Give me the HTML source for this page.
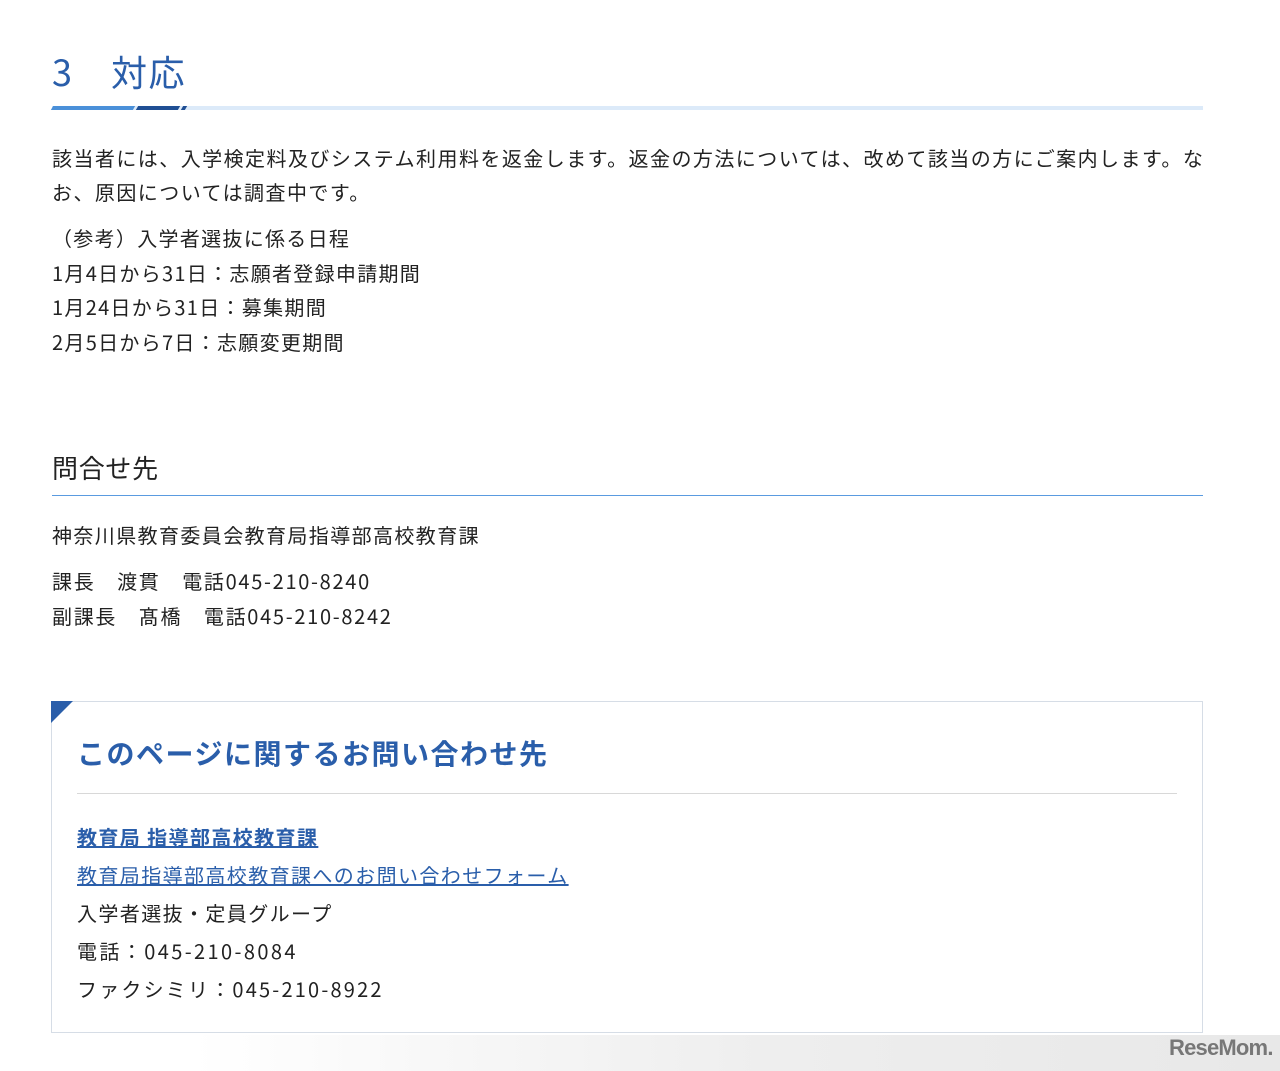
<!DOCTYPE html>
<html><head><meta charset="utf-8"><style>
body{margin:0;width:1280px;height:1071px;background:#fff;font-family:"Noto Sans CJK JP","Liberation Sans",sans-serif;color:#222;position:relative;overflow:hidden;letter-spacing:0.7px}
.a{position:absolute;white-space:nowrap}
p{margin:0}
</style></head><body>
<div class="a" style="left:52px;top:46px;font-size:36px;color:#2a5eaa;line-height:50px;letter-spacing:1.5px">3　対応</div>
<div class="a" style="left:52px;top:106px;width:1151px;height:4px;background:#dceaf9"></div>
<div class="a" style="left:52px;top:106px;width:82px;height:4px;background:#4a90d9;transform:skewX(-30deg)"></div>
<div class="a" style="left:137px;top:106px;width:42px;height:4px;background:#1f4f94;transform:skewX(-30deg)"></div>
<div class="a" style="left:182px;top:106px;width:4px;height:4px;background:#1f4f94;transform:skewX(-30deg)"></div>
<div class="a" style="left:52px;top:141px;font-size:20px;line-height:34px;letter-spacing:1.45px">該当者には、入学検定料及びシステム利用料を返金します。返金の方法については、改めて該当の方にご案内します。な<br>お、原因については調査中です。</div>
<div class="a" style="left:52px;top:221px;font-size:20px;line-height:34.5px;letter-spacing:1.3px">（参考）入学者選抜に係る日程<br>1月4日から31日：志願者登録申請期間<br>1月24日から31日：募集期間<br>2月5日から7日：志願変更期間</div>
<div class="a" style="left:52px;top:449px;font-size:26px;line-height:38px">問合せ先</div>
<div class="a" style="left:52px;top:495px;width:1151px;height:1px;background:#5a9be0"></div>
<div class="a" style="left:52px;top:518px;font-size:20px;line-height:34px;letter-spacing:1.4px">神奈川県教育委員会教育局指導部高校教育課</div>
<div class="a" style="left:52px;top:564px;font-size:20px;line-height:34.5px;letter-spacing:1.7px">課長　渡貫　電話045-210-8240<br>副課長　髙橋　電話045-210-8242</div>
<div class="a" style="left:51px;top:701px;width:1150px;height:330px;border:1px solid #d6dde6"></div>
<div class="a" style="left:51px;top:701px;width:0;height:0;border-top:22px solid #2a5eaa;border-right:22px solid transparent"></div>
<div class="a" style="left:77px;top:731px;font-size:28px;font-weight:bold;color:#2a5eaa;line-height:44px;letter-spacing:1.5px">このページに関するお問い合わせ先</div>
<div class="a" style="left:77px;top:793px;width:1100px;height:1px;background:#d8d8d8"></div>
<div class="a" style="left:77px;top:818px;font-size:20px;line-height:38px;letter-spacing:1.4px"><span style="color:#2a5eaa;font-weight:bold;text-decoration:underline">教育局 指導部高校教育課</span><br><span style="color:#2a5eaa;text-decoration:underline">教育局指導部高校教育課へのお問い合わせフォーム</span><br>入学者選抜・定員グループ<br><span style="letter-spacing:2.4px">電話：045-210-8084</span><br><span style="letter-spacing:2.2px">ファクシミリ：045-210-8922</span></div>
<div class="a" style="left:0;top:1035px;width:1280px;height:36px;background:linear-gradient(90deg,#fff 15%,#eee 60%,#e8e8e8)"></div>
<div class="a" style="left:1169px;top:1034px;font-family:'Liberation Sans',sans-serif;font-size:22px;font-weight:bold;color:#777;letter-spacing:-0.8px;line-height:28px">ReseMom.</div>
</body></html>
